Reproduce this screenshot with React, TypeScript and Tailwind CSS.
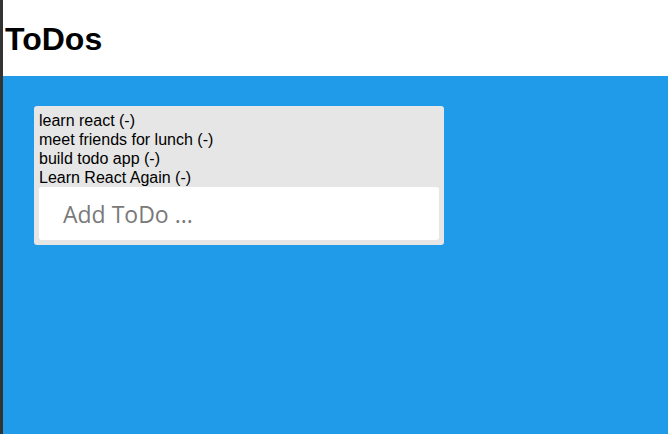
export default function App() {
  const todos = ['learn react', 'meet friends for lunch', 'build todo app', 'Learn React Again'];
  return (
    <div className="flex h-[434px] w-[668px] overflow-hidden bg-white font-['Liberation_Sans',Arial,sans-serif]">
      <div className="w-[3px] shrink-0 bg-[#333333]" />
      <div className="flex flex-1 flex-col">
        {/* Header */}
        <div className="flex h-[76px] items-center px-[2px] pt-[1px]">
          <h1 className="text-[32px] font-bold leading-none text-black">ToDos</h1>
        </div>
        {/* Main */}
        <div className="flex-1 bg-[#209be9] px-[31px] pt-[30px]">
          <div className="w-[410px] rounded-[3px] bg-[#e6e6e6] p-[5px]">
            <ul>
              {todos.map(t => (
                <li key={t} className="text-[16px] leading-[19px] text-black">{t} (-)</li>
              ))}
            </ul>
            <input
              placeholder="Add ToDo ..."
              className="block h-[53px] w-full rounded-[3px] bg-white pl-[24px] font-['Open_Sans',sans-serif] text-[23px] text-black outline-none placeholder:text-[#7a7a7a]"
            />
          </div>
        </div>
      </div>
    </div>
  );
}
